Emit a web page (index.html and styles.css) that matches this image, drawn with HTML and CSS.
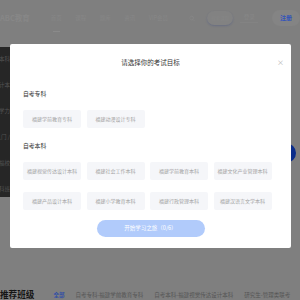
FILE: index.html
```html
<!DOCTYPE html>
<html lang="zh-CN">
<head>
<meta charset="utf-8">
<title>请选择你的考试目标</title>
<link rel="stylesheet" href="styles.css">
</head>
<body>
<div class="page">
  <header class="topbar">
    <div class="logo">ABC教育</div>
    <nav class="nav">
      <a class="nav-item active">首页</a>
      <a class="nav-item">课程</a>
      <a class="nav-item">题库</a>
      <a class="nav-item">资讯</a>
      <a class="nav-item">VIP会员</a>
    </nav>
    <svg class="search-icon" viewBox="0 0 10 10" width="7" height="7"><circle cx="4.3" cy="4.3" r="3" fill="none" stroke="#8a8a8a" stroke-width="1"/><path d="M6.5 6.5L9 9" stroke="#8a8a8a" stroke-width="1"/></svg>
    <div class="search-pill">搜索课程</div>
    <a class="login">登录</a>
    <a class="register">注册</a>
  </header>

  <section class="hero">
    <ul class="side-menu">
      <li>自考专科 / 本科</li>
      <li>视觉传达设计本</li>
      <li>在职同等学力</li>
      <li>研究生入门 /</li>
      <li>福建高校福校</li>
      <li>专升本专科班</li>
    </ul>
    <span class="arrow"></span>
  </section>

  <section class="recommend">
    <h2 class="recommend-title">推荐班级</h2>
    <div class="tabs">
      <a class="tab active">全部</a>
      <a class="tab">自考专科-福建学前教育专科</a>
      <a class="tab">自考本科-福建视觉传达设计本科</a>
      <a class="tab">研究生-管理类联考</a>
    </div>
  </section>
</div>

<div class="modal">
  <h1 class="modal-title">请选择你的考试目标</h1>
  <span class="close">×</span>

  <h3 class="group-label">自考专科</h3>
  <div class="chips">
    <span class="chip">福建学前教育专科</span>
    <span class="chip">福建动漫设计专科</span>
  </div>

  <h3 class="group-label second">自考本科</h3>
  <div class="chips">
    <span class="chip">福建视觉传达设计本科</span>
    <span class="chip">福建社会工作本科</span>
    <span class="chip">福建学前教育本科</span>
    <span class="chip">福建文化产业管理本科</span>
    <span class="chip">福建产品设计本科</span>
    <span class="chip">福建小学教育本科</span>
    <span class="chip">福建行政管理本科</span>
    <span class="chip">福建汉语言文学本科</span>
  </div>

  <div class="actions">
    <button class="start">开始学习之旅（0/6）</button>
  </div>
</div>
</body>
</html>
```

FILE: styles.css
```css
* { box-sizing: border-box; margin: 0; padding: 0; }

html, body {
  width: 300px;
  height: 300px;
  overflow: hidden;
}

body {
  background: #7f7f7f;
  font-family: "Noto Sans CJK SC", "Noto Sans", sans-serif;
  color: #333;
}

.page {
  width: 300px;
  height: 300px;
  overflow: hidden;
}

/* ---------- header (dimmed) ---------- */
.topbar {
  height: 36px;
  display: flex;
  align-items: center;
  white-space: nowrap;
}

.logo {
  width: 35px;
  font-size: 7.5px;
  font-weight: 700;
  color: #878787;
  line-height: 10px;
}

.nav {
  display: flex;
  gap: 13.5px;
  margin-left: 20px;
}

.nav-item {
  position: relative;
  font-size: 5.5px;
  line-height: 8px;
  color: #878787;
}

.nav-item.active::after {
  content: "";
  position: absolute;
  left: 2px;
  right: 2px;
  bottom: -10px;
  height: 1px;
  background: #8a8a8a;
}

.search-icon {
  margin-left: 21px;
}

.search-pill {
  margin-left: 12px;
  width: 30px;
  height: 14px;
  border-radius: 7px;
  background: #828282;
  box-shadow: 0 1px 2px rgba(40, 60, 140, 0.25);
  font-size: 4.5px;
  line-height: 14px;
  color: #868686;
  text-align: center;
}

.login {
  margin-left: 7px;
  width: 20px;
  font-size: 5.5px;
  line-height: 8px;
  color: #878787;
  text-align: center;
  border-bottom: 1px solid #838383;
  padding-bottom: 1px;
}

.register {
  margin-left: 14px;
  height: 16px;
  padding: 0 8px;
  border-radius: 8px;
  background: #848484;
  font-size: 6px;
  font-weight: 700;
  line-height: 16px;
  color: #3354bb;
}

/* ---------- hero ---------- */
.hero {
  position: relative;
  margin-top: 11px;
  height: 150px;
}

.side-menu {
  list-style: none;
  width: 60px;
  height: 150px;
  margin-left: -50px;
  background: #262626;
  text-align: right;
}

.side-menu li {
  height: 26px;
  line-height: 24px;
  font-size: 5.5px;
  color: #535353;
  white-space: nowrap;
}

.arrow {
  position: absolute;
  right: 4px;
  top: 96px;
  width: 20px;
  height: 20px;
  border-radius: 50%;
  background: #0b2c8a;
}

/* ---------- recommend ---------- */
.recommend {
  margin-top: 91px;
  display: flex;
  align-items: center;
  white-space: nowrap;
}

.recommend-title {
  font-size: 8.6px;
  font-weight: 700;
  line-height: 12px;
  color: #151515;
}

.tabs {
  display: flex;
  gap: 11px;
  margin-left: 19px;
  padding-top: 2px;
}

.tab {
  font-size: 5.5px;
  line-height: 8px;
  color: #555;
}

.tab.active {
  color: #2f4ea6;
  font-weight: 700;
}

/* ---------- modal ---------- */
.modal {
  position: fixed;
  left: 10px;
  top: 44px;
  width: 281px;
  height: 204px;
  background: #fff;
  border-radius: 2px;
  padding: 13px 13px 11px;
}

.modal-title {
  font-size: 6.5px;
  font-weight: 400;
  line-height: 10px;
  text-align: center;
  color: #333;
}

.close {
  position: absolute;
  right: 7px;
  top: 13px;
  font-size: 7px;
  line-height: 10px;
  color: #b0b0b0;
}

.group-label {
  margin-top: 23px;
  font-size: 5.8px;
  font-weight: 400;
  line-height: 8px;
  color: #333;
}

.group-label.second {
  margin-top: 13.5px;
}

.chips {
  margin-top: 12px;
  display: grid;
  grid-template-columns: repeat(4, 58px);
  column-gap: 5.5px;
  row-gap: 12px;
}

.chip {
  height: 18px;
  border-radius: 2px;
  background: #f5f6f9;
  font-size: 5px;
  line-height: 18px;
  text-align: center;
  color: #a3a3a3;
  white-space: nowrap;
}

.actions {
  margin-top: 10px;
  display: flex;
  justify-content: center;
}

.start {
  width: 108px;
  height: 17px;
  border: 0;
  border-radius: 9px;
  background: #b1cbfb;
  color: #fff;
  font-family: inherit;
  font-size: 5.5px;
  line-height: 17px;
}
```
